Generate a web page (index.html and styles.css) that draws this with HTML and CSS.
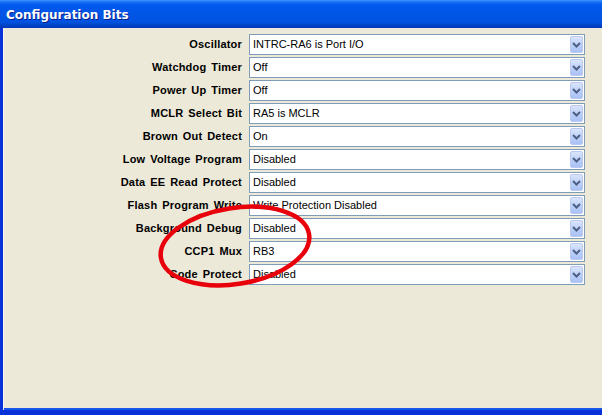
FILE: index.html
```html
<!DOCTYPE html>
<html>
<head>
<meta charset="utf-8">
<link rel="stylesheet" href="styles.css">
</head>
<body>
<div class="window">
  <div class="titlebar"><span class="title">Configuration Bits</span></div>
  <div class="client">
    <div class="form">
      <label class="lbl">Oscillator</label>
      <div class="combo"><span class="val">INTRC-RA6 is Port I/O</span><span class="btn"><svg width="9" height="6" viewBox="0 0 9 6"><path d="M1 1 L4.5 4.5 L8 1" fill="none" stroke="#4d6185" stroke-width="2"/></svg></span></div>
      <label class="lbl">Watchdog Timer</label>
      <div class="combo"><span class="val">Off</span><span class="btn"><svg width="9" height="6" viewBox="0 0 9 6"><path d="M1 1 L4.5 4.5 L8 1" fill="none" stroke="#4d6185" stroke-width="2"/></svg></span></div>
      <label class="lbl">Power Up Timer</label>
      <div class="combo"><span class="val">Off</span><span class="btn"><svg width="9" height="6" viewBox="0 0 9 6"><path d="M1 1 L4.5 4.5 L8 1" fill="none" stroke="#4d6185" stroke-width="2"/></svg></span></div>
      <label class="lbl">MCLR Select Bit</label>
      <div class="combo"><span class="val">RA5 is MCLR</span><span class="btn"><svg width="9" height="6" viewBox="0 0 9 6"><path d="M1 1 L4.5 4.5 L8 1" fill="none" stroke="#4d6185" stroke-width="2"/></svg></span></div>
      <label class="lbl">Brown Out Detect</label>
      <div class="combo"><span class="val">On</span><span class="btn"><svg width="9" height="6" viewBox="0 0 9 6"><path d="M1 1 L4.5 4.5 L8 1" fill="none" stroke="#4d6185" stroke-width="2"/></svg></span></div>
      <label class="lbl">Low Voltage Program</label>
      <div class="combo"><span class="val">Disabled</span><span class="btn"><svg width="9" height="6" viewBox="0 0 9 6"><path d="M1 1 L4.5 4.5 L8 1" fill="none" stroke="#4d6185" stroke-width="2"/></svg></span></div>
      <label class="lbl">Data EE Read Protect</label>
      <div class="combo"><span class="val">Disabled</span><span class="btn"><svg width="9" height="6" viewBox="0 0 9 6"><path d="M1 1 L4.5 4.5 L8 1" fill="none" stroke="#4d6185" stroke-width="2"/></svg></span></div>
      <label class="lbl">Flash Program Write</label>
      <div class="combo"><span class="val">Write Protection Disabled</span><span class="btn"><svg width="9" height="6" viewBox="0 0 9 6"><path d="M1 1 L4.5 4.5 L8 1" fill="none" stroke="#4d6185" stroke-width="2"/></svg></span></div>
      <label class="lbl">Background Debug</label>
      <div class="combo"><span class="val">Disabled</span><span class="btn"><svg width="9" height="6" viewBox="0 0 9 6"><path d="M1 1 L4.5 4.5 L8 1" fill="none" stroke="#4d6185" stroke-width="2"/></svg></span></div>
      <label class="lbl">CCP1 Mux</label>
      <div class="combo"><span class="val">RB3</span><span class="btn"><svg width="9" height="6" viewBox="0 0 9 6"><path d="M1 1 L4.5 4.5 L8 1" fill="none" stroke="#4d6185" stroke-width="2"/></svg></span></div>
      <label class="lbl">Code Protect</label>
      <div class="combo"><span class="val">Disabled</span><span class="btn"><svg width="9" height="6" viewBox="0 0 9 6"><path d="M1 1 L4.5 4.5 L8 1" fill="none" stroke="#4d6185" stroke-width="2"/></svg></span></div>
    </div>
  </div>
  <svg class="circle" width="602" height="415" viewBox="0 0 602 415">
    <ellipse cx="235" cy="246" rx="75" ry="38" transform="rotate(-9 235 246)" fill="none" stroke="#e8000b" stroke-width="4.5"/>
  </svg>
</div>
</body>
</html>
```

FILE: styles.css
```css
* { box-sizing: border-box; }
html, body { margin: 0; padding: 0; }
body {
  width: 602px;
  height: 415px;
  overflow: hidden;
  background: #ece9d8;
  font-family: "Liberation Sans", Arial, sans-serif;
}
.window {
  position: relative;
  width: 602px;
  height: 415px;
  display: flex;
  flex-direction: column;
  border-left: 3px solid #0831d9;
  border-bottom: 5px solid #0831d9;
  box-shadow: inset 0 -2px 0 #1657e8;
}
.titlebar {
  height: 28px;
  margin-left: -3px;
  flex: none;
  background: linear-gradient(to bottom, #3d95ff 0px, #1a6ff3 2px, #0058ee 5px, #0055e5 14px, #0053e1 22px, #0046c8 25px, #0136b9 28px);
  display: flex;
  align-items: center;
  padding-left: 6px;
  padding-top: 1px;
}
.title {
  color: #ffffff;
  font-family: "DejaVu Sans", sans-serif;
  font-weight: bold;
  font-size: 12px;
  letter-spacing: 0;
  text-shadow: 1px 1px 0 #0a1e8c;
}
.client {
  flex: 1;
  border-left: 1px solid #f5f4ee;
  padding-top: 6px;
}
.form {
  display: grid;
  grid-template-columns: 238px 336px;
  column-gap: 7px;
  row-gap: 2px;
  grid-auto-rows: 21px;
}
.lbl {
  text-align: right;
  font-weight: bold;
  font-size: 11px;
  letter-spacing: 0.2px;
  word-spacing: 1.6px;
  color: #000;
  line-height: 21px;
  white-space: nowrap;
}
.combo {
  position: relative;
  display: flex;
  align-items: center;
  justify-content: space-between;
  background: #fff;
  border: 1px solid #7f9db9;
  padding: 0 1px 0 3px;
}
.val {
  font-size: 11px;
  color: #000;
  line-height: 19px;
  white-space: nowrap;
}
.btn {
  width: 13px;
  height: 17px;
  border: 1px solid #b9c9ef;
  border-radius: 2px;
  background: linear-gradient(to bottom, #dbe5fb, #b8cdf8 60%, #aac1f5);
  display: flex;
  align-items: center;
  justify-content: center;
}
.btn svg { display: block; }
.circle {
  position: absolute;
  left: -3px;
  top: 0;
  pointer-events: none;
}
```
